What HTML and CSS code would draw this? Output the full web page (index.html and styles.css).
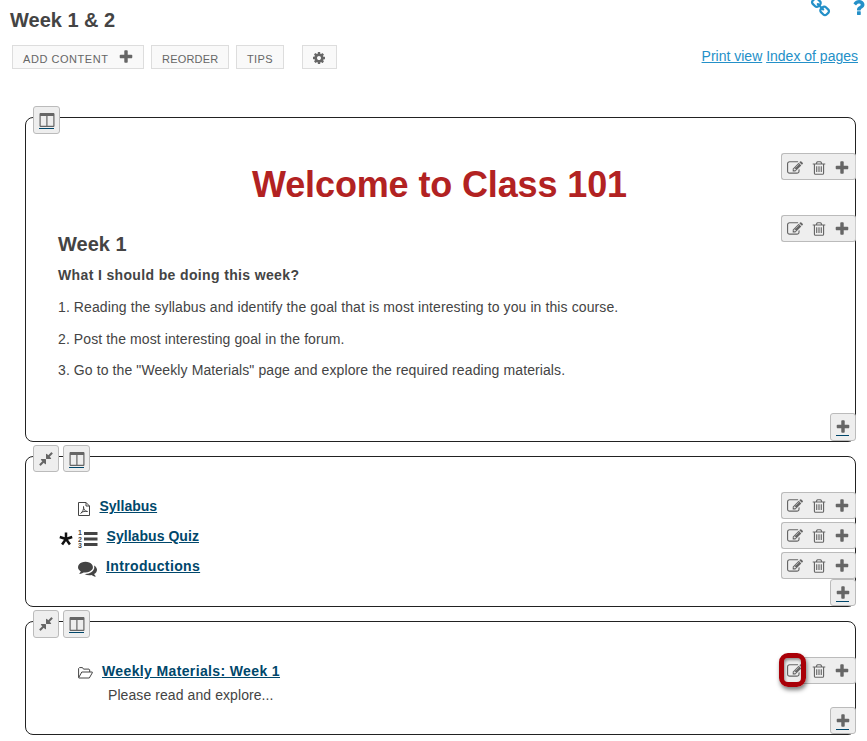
FILE: index.html
```
<!DOCTYPE html>
<html lang="en">
<head>
<meta charset="utf-8">
<title>Week 1 &amp; 2</title>
<link rel="stylesheet" href="styles.css">
</head>
<body>
<svg class="defs" aria-hidden="true">
<symbol id="plus" viewBox="0 0 1792 1792"><path d="M1600 736v192q0 40-28 68t-68 28h-416v416q0 40-28 68t-68 28h-192q-40 0-68-28t-28-68v-416h-416q-40 0-68-28t-28-68v-192q0-40 28-68t68-28h416v-416q0-40 28-68t68-28h192q40 0 68 28t28 68v416h416q40 0 68 28t28 68z"/></symbol>
<symbol id="cog" viewBox="0 0 1792 1792"><path d="M1152 896q0-106-75-181t-181-75-181 75-75 181 75 181 181 75 181-75 75-181zm512-109v222q0 12-8 23t-20 13l-185 28q-19 54-39 91 35 50 107 138 10 12 10 25t-9 23q-27 37-99 108t-94 71q-12 0-26-9l-138-108q-44 23-91 38-16 136-29 186-7 28-36 28h-222q-14 0-24.5-8.5t-11.5-21.5l-28-184q-49-16-90-37l-141 107q-10 9-25 9-14 0-25-11-126-114-165-168-7-10-7-23 0-12 8-23 15-21 51-66.5t54-70.5q-27-50-41-99l-183-27q-13-2-21-12.5t-8-23.5v-222q0-12 8-23t19-13l186-28q14-46 39-92-40-57-107-138-10-12-10-24 0-10 9-23 26-36 98.5-107.5t94.5-71.5q13 0 26 10l138 107q44-23 91-38 16-136 29-186 7-28 36-28h222q14 0 24.5 8.5t11.5 21.5l28 184q49 16 90 37l142-107q9-9 24-9 13 0 25 10 129 119 165 170 7 8 7 22 0 12-8 23-15 21-51 66.5t-54 70.5q26 50 41 98l183 28q13 2 21 12.5t8 23.5z"/></symbol>
<symbol id="edit" viewBox="0 0 1792 1792"><path d="M888 1184l116-116-152-152-116 116v56h96v96h56zm440-720q-16-16-33 1l-350 350q-17 17-1 33t33-1l350-350q17-17 1-33zm80 594v190q0 119-84.5 203.5t-203.5 84.5h-832q-119 0-203.5-84.5t-84.5-203.5v-832q0-119 84.5-203.5t203.5-84.5h832q63 0 117 25 15 7 18 23 3 17-9 29l-49 49q-14 14-32 8-23-6-45-6h-832q-66 0-113 47t-47 113v832q0 66 47 113t113 47h832q66 0 113-47t47-113v-126q0-13 9-22l64-64q15-15 35-7t20 29zm-96-738l288 288-672 672h-288v-288zm444 132l-92 92-288-288 92-92q28-28 68-28t68 28l152 152q28 28 28 68t-28 68z"/></symbol>
<symbol id="trash" viewBox="0 0 1792 1792"><path d="M704 736v576q0 14-9 23t-23 9h-64q-14 0-23-9t-9-23v-576q0-14 9-23t23-9h64q14 0 23 9t9 23zm256 0v576q0 14-9 23t-23 9h-64q-14 0-23-9t-9-23v-576q0-14 9-23t23-9h64q14 0 23 9t9 23zm256 0v576q0 14-9 23t-23 9h-64q-14 0-23-9t-9-23v-576q0-14 9-23t23-9h64q14 0 23 9t9 23zm128 724v-948h-896v948q0 22 7 40.5t14.5 27 10.5 8.5h832q3 0 10.5-8.5t14.5-27 7-40.5zm-672-1076h448l-48-117q-7-9-17-11h-317q-10 2-17 11zm928 32v64q0 14-9 23t-23 9h-96v948q0 83-47 143.5t-113 60.5h-832q-66 0-113-58.5t-47-141.5v-952h-96q-14 0-23-9t-9-23v-64q0-14 9-23t23-9h309l70-167q15-37 54-63t79-26h320q40 0 79 26t54 63l70 167h309q14 0 23 9t9 23z"/></symbol>
<symbol id="compress" viewBox="0 0 1792 1792"><path d="M896 960v448q0 26-19 45t-45 19-45-19l-144-144-332 332q-10 10-23 10t-23-10l-114-114q-10-10-10-23t10-23l332-332-144-144q-19-19-19-45t19-45 45-19h448q26 0 45 19t19 45zm755-672q0 13-10 23l-332 332 144 144q19 19 19 45t-19 45-45 19h-448q-26 0-45-19t-19-45v-448q0-26 19-45t45-19 45 19l144 144 332-332q10-10 23-10t23 10l114 114q10 10 10 23z"/></symbol>
<symbol id="columns" viewBox="0 0 16 16"><path fill-rule="evenodd" d="M1.200 1h13.600l.700.700v12.600l-.700.700H1.200l-.700-.700V1.700zM1.700 4v9.800h5.600V4zM8.500 4v9.800h5.800V4z"/></symbol>
<symbol id="link" viewBox="0 0 1792 1792"><path d="M1520 1216q0-40-28-68l-208-208q-28-28-68-28-42 0-72 32 3 3 19 18.500t21.500 21.500 15 19 13 25.500 3.500 27.500q0 40-28 68t-68 28q-15 0-27.500-3.500t-25.500-13-19-15-21.500-21.500-18.500-19q-33 31-33 73 0 40 28 68l206 207q27 27 68 27 40 0 68-26l147-146q28-28 28-67zm-703-705q0-40-28-68l-206-207q-28-28-68-28-39 0-68 27l-147 146q-28 28-28 67 0 40 28 68l208 208q27 27 68 27 42 0 72-31-3-3-19-18.500t-21.500-21.500-15-19-13-25.500-3.500-27.500q0-40 28-68t68-28q15 0 27.500 3.500t25.500 13 19 15 21.500 21.500 18.500 19q33-31 33-73zm895 705q0 120-85 203l-147 146q-83 83-203 83-121 0-204-85l-206-207q-83-83-83-203 0-123 88-209l-88-88q-86 88-208 88-120 0-204-84l-208-208q-84-84-84-204t85-203l147-146q83-83 203-83 121 0 204 85l206 207q83 83 83 203 0 123-88 209l88 88q86-88 208-88 120 0 204 84l208 208q84 84 84 204z"/></symbol>
<symbol id="question" viewBox="0 0 1792 1792"><path d="M1088 1256v240q0 16-12 28t-28 12h-240q-16 0-28-12t-12-28v-240q0-16 12-28t28-12h240q16 0 28 12t12 28zm316-600q0 54-15.500 101t-35 76.500-55 59.500-57.500 43.500-61 35.500q-41 23-68.500 65t-27.500 67q0 17-12 32.500t-28 15.500h-240q-15 0-25.500-18.500t-10.500-37.500v-45q0-83 65-156.500t143-108.500q59-27 84-56t25-76q0-42-46.500-74t-107.500-32q-65 0-108 29-35 25-107 115-13 16-31 16-12 0-25-8l-164-125q-13-10-15.500-25t5.500-28q160-266 464-266 80 0 161 31t146 83 106 127.500 41 158.500z"/></symbol>
<symbol id="comments" viewBox="0 0 1792 1792"><path d="M1408 768q0 139-94 257t-256.500 186.500-353.500 68.500q-86 0-176-16-124 88-278 128-36 9-86 16h-3q-11 0-20.500-8t-11.500-21q-1-3-1-6.500t.5-6.500 2-6l2.500-5 3.500-5.500 4-5 4.500-5 4-4.500q5-6 23-25t26-29.500 22.500-29 25-38.500 20.500-44q-124-72-195-177t-71-224q0-139 94-257t256.500-186.500 353.500-68.500 353.500 68.500 256.500 186.500 94 257zm384 256q0 120-71 224.500t-195 176.500q10 24 20.500 44t25 38.500 22.500 29 26 29.500 23 25q1 1 4 4.500t4.500 5 4 5 3.500 5.500l2.500 5 2 6 .5 6.500-1 6.500q-3 14-13 22t-22 7q-50-7-86-16-154-40-278-128-90 16-176 16-271 0-472-132 58 4 88 4 161 0 309-45t264-129q125-92 192-212t67-254q0-77-23-152 129 71 204 178t75 230z"/></symbol>
</svg>

<header class="top">
  <h2 class="page-title">Week 1 &amp; 2</h2>
  <div class="help"><svg class="i22"><use href="#link"/></svg><svg class="i22"><use href="#question"/></svg></div>
</header>
<nav class="bar">
  <div class="btn add">ADD CONTENT <svg class="i16"><use href="#plus"/></svg></div>
  <div class="btn reorder">REORDER</div>
  <div class="btn tips">TIPS</div>
  <div class="btn gear"><svg class="i14"><use href="#cog"/></svg></div>
  <div class="links"><a>Print view</a> <a>Index of pages</a></div>
</nav>

<main>
<section class="box box-a">
  <div class="tabs"><div class="tab wide"><svg class="i16"><use href="#columns"/></svg></div></div>
  <div class="row hero">
    <h1>Welcome to Class 101</h1>
    <div class="tools"><svg class="i16"><use href="#edit"/></svg><svg class="i16"><use href="#trash"/></svg><svg class="i16"><use href="#plus"/></svg></div>
  </div>
  <div class="row">
    <div class="copy">
      <h2>Week 1</h2>
      <h4>What I should be doing this week?</h4>
      <p>1. Reading the syllabus and identify the goal that is most interesting to you in this course.</p>
      <p>2. Post the most interesting goal in the forum.</p>
      <p>3. Go to the "Weekly Materials" page and explore the required reading materials.</p>
    </div>
    <div class="tools"><svg class="i16"><use href="#edit"/></svg><svg class="i16"><use href="#trash"/></svg><svg class="i16"><use href="#plus"/></svg></div>
  </div>
  <div class="corner"><svg class="i16"><use href="#plus"/></svg></div>
</section>

<section class="box box-b">
  <div class="tabs"><div class="tab"><svg class="i16"><use href="#compress"/></svg></div><div class="tab wide"><svg class="i16"><use href="#columns"/></svg></div></div>
  <div class="row item">
    <div class="lead"><svg class="pdf" viewBox="0 0 12 14"><path d="M.5.500h7.500l3.500 3.500v9.500H.5zM8 .500V4h3.500M2.500 11.500C4.500 10 6 7.500 5.500 4.500 5.500 7.500 7 9.500 9.500 9.500M3 11c1.500-1.500 4-2 6.500-1.500" fill="none" stroke="currentColor"/></svg></div>
    <a class="title t1">Syllabus</a>
    <div class="tools"><svg class="i16"><use href="#edit"/></svg><svg class="i16"><use href="#trash"/></svg><svg class="i16"><use href="#plus"/></svg></div>
  </div>
  <div class="row item">
    <div class="lead"><svg class="star" viewBox="0 0 14 14"><path d="M7 7V.500M7 7L.8 5M7 7l6.200-2M7 7l-3.900 5.500M7 7l3.900 5.500" fill="none" stroke="#111" stroke-width="2.500"/></svg><svg class="ol" viewBox="0 0 20 20"><path d="M6 3h13.500v3H6zM6 8.500h13.500v3H6zM6 14h13.500v3H6z"/><text x="0" y="6">1</text><text x="0" y="12.500">2</text><text x="0" y="19">3</text></svg></div>
    <a class="title t2">Syllabus Quiz</a>
    <div class="tools"><svg class="i16"><use href="#edit"/></svg><svg class="i16"><use href="#trash"/></svg><svg class="i16"><use href="#plus"/></svg></div>
  </div>
  <div class="row item">
    <div class="lead"><svg class="talk"><use href="#comments"/></svg></div>
    <a class="title t3">Introductions</a>
    <div class="tools"><svg class="i16"><use href="#edit"/></svg><svg class="i16"><use href="#trash"/></svg><svg class="i16"><use href="#plus"/></svg></div>
  </div>
  <div class="corner"><svg class="i16"><use href="#plus"/></svg></div>
</section>

<section class="box box-c">
  <div class="tabs"><div class="tab"><svg class="i16"><use href="#compress"/></svg></div><div class="tab wide"><svg class="i16"><use href="#columns"/></svg></div></div>
  <div class="row item">
    <div class="lead"><svg class="folder" viewBox="0 0 15 12"><path d="M.6 10.500V1.500l.9-.9h3l1 1.500h5.500l.7.700V5M.6 10.800L3.800 5h10.500v.800l-3 5.200H.8" fill="none" stroke="currentColor"/></svg></div>
    <a class="title t4">Weekly Materials: Week 1</a>
    <div class="tools"><svg class="i16"><use href="#edit"/></svg><svg class="i16"><use href="#trash"/></svg><svg class="i16"><use href="#plus"/></svg><span class="ring"></span></div>
  </div>
  <p class="desc">Please read and explore...</p>
  <div class="corner"><svg class="i16"><use href="#plus"/></svg></div>
</section>
</main>
</body>
</html>
```
FILE: styles.css
```
* { box-sizing: border-box; }
body { margin: 0; height: 741px; overflow: hidden; background: #fff; color: #444; font: 14px/20px "Liberation Sans", Arial, sans-serif; }
h1, h2, h4, p { margin: 0; }
svg { display: block; flex: none; fill: currentColor; }
.defs { position: absolute; width: 0; height: 0; }
.i14 { width: 14px; height: 14px; }
.i16 { width: 16px; height: 16px; }
.i22 { width: 21px; height: 21px; }

.top { display: flex; justify-content: space-between; height: 45px; padding-left: 10px; }
.page-title { padding-top: 8px; font-size: 20px; line-height: 24px; }
.help { display: flex; gap: 17px; margin: -3px -2px 0 0; color: #2490c8; }

.bar { display: flex; height: 24px; padding-left: 12px; }
.btn { display: flex; align-items: center; height: 24px; padding: 3px 0 0 10px; border: 1px solid #ddd; background: #f9f9f9; color: #666; font-size: 11px; line-height: 20px; white-space: nowrap; }
.add { width: 132px; margin-right: 7px; letter-spacing: .55px; }
.add svg { margin: -3px 0 0 9px; }
.reorder { width: 78px; margin-right: 7px; letter-spacing: .2px; }
.tips { width: 48px; margin-right: 18px; letter-spacing: .35px; }
.gear { width: 35px; padding: 2px 0 0 9px; }
.links { margin: 1px 9px 0 auto; color: #2490c8; }
.links a { text-decoration: underline; }

main { display: flex; flex-direction: column; gap: 14px; padding: 48px 11px 0 25px; }
.box { position: relative; border: 1px solid #222; border-radius: 8px; padding-top: 35px; }
.box-a { height: 325px; }
.box-b { height: 151px; }
.box-c { height: 114px; }
.tabs { position: absolute; left: 7px; top: -12px; display: flex; gap: 4px; }
.tab { width: 26px; height: 27px; padding: 5px 0 0 4px; border: 1px solid #bbb; border-radius: 3px; background: #eee; color: #666; }
.box-a .tab, .box-c .tab { height: 28px; }
.tab.wide { width: 27px; padding-left: 5px; }
.wide::after { content: ""; display: block; width: 15px; height: 1px; background: #00476b; }

.row { display: flex; align-items: flex-start; margin-right: -1px; }
.tools { position: relative; display: flex; flex: none; width: 75px; height: 27px; margin-left: auto; padding: 5px 0 0 4.5px; gap: 8px; border: 1px solid #bbb; border-right-color: #ccc; border-radius: 3px; background: #eee; color: #666; }
.hero .tools { padding-top: 6px; }
.tools svg:nth-child(3) { margin-left: -1px; }
.hero { height: 62px; }
.hero h1 { flex: 1; padding: 12px 0 0 72px; text-align: center; color: #b22222; font-size: 36px; line-height: 40px; letter-spacing: -.13px; }
.copy { padding: 17px 0 0 32px; }
.copy h2 { font-size: 20px; line-height: 24px; margin-bottom: 9px; }
.copy h4 { font-size: 14px; margin-bottom: 12px; letter-spacing: .36px; }
.copy p { margin-bottom: 12px; letter-spacing: .1px; }
.copy p + p + p { margin-top: -1px; }

.corner { position: absolute; right: -1px; bottom: 0; width: 26px; height: 28px; padding: 5px 0 0 4px; border: 1px solid #bbb; border-radius: 3px; background: #eee; color: #666; }
.box-b .corner, .box-c .corner { height: 27px; }
.corner::after { content: ""; display: block; width: 13px; height: 1px; margin: 0 0 0 1px; background: #00476b; }

.item { height: 30px; }
.lead { display: flex; flex: none; width: 52px; padding-left: 33px; height: 27px; }
.title { padding-top: 4px; color: #00476b; font-weight: bold; text-decoration: underline; white-space: nowrap; }
.t1 { margin-left: 21.5px; }
.t2 { margin-left: 28.5px; letter-spacing: .05px; }
.t3 { margin-left: 28px; letter-spacing: .36px; }
.t4 { margin-left: 24px; letter-spacing: .37px; }
.pdf { width: 12px; height: 14px; margin: 10px 0 0 19px; }
.star { width: 14px; height: 14px; margin: 10px 5px 0 0; }
.ol { width: 20px; height: 20px; margin-top: 7px; }
.ol text { font: bold 7px "Liberation Sans", Arial, sans-serif; }
.talk { width: 19px; height: 19px; margin: 7px 0 0 19px; }
.folder { width: 15px; height: 12px; margin: 10px 0 0 19px; }
.desc { padding: 0 0 0 82px; margin-top: -2px; letter-spacing: .08px; }
.ring { position: absolute; left: -3px; top: -5px; width: 27px; height: 34px; border: 5px solid #a90008; border-radius: 9px; box-shadow: 1px 3px 4px rgba(0,0,0,.5), inset 1px 2px 3px rgba(0,0,0,.4); }
```
